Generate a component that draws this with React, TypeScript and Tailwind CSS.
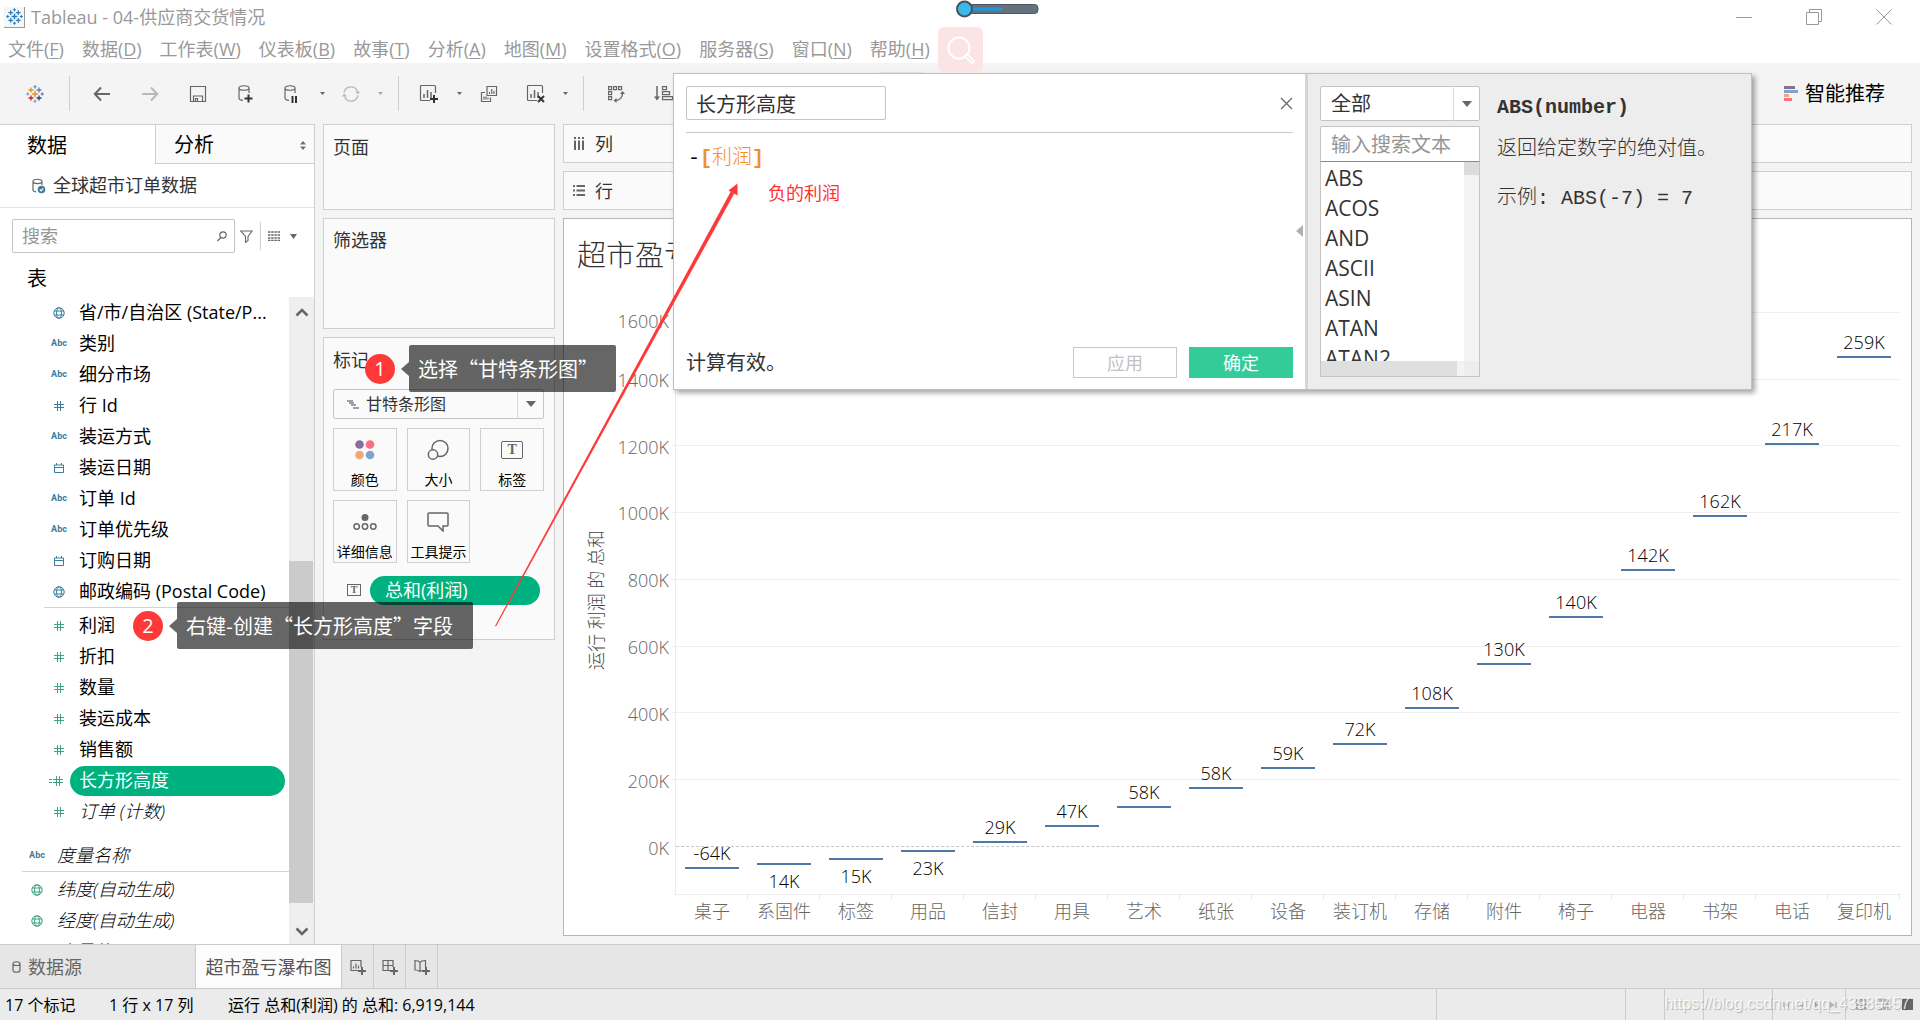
import React from "react";

const INK = "#666666";
const BLUE = "#3a7d9d";
const GREEN = "#3ba57f";

/* ---------- icons ---------- */

type Plus = { x: number; y: number; r: number; c: string; w: number };

const pluses: Plus[] = [
  { x: 9, y: 9, r: 3, c: "#eb912c", w: 1.6 },
  { x: 5, y: 5, r: 2.5, c: "#eb912c", w: 1.3 },
  { x: 13, y: 5, r: 2.5, c: "#5b879b", w: 1.3 },
  { x: 5, y: 13, r: 2.5, c: "#c72035", w: 1.3 },
  { x: 13, y: 13, r: 2.5, c: "#1f457e", w: 1.3 },
  { x: 9, y: 1.8, r: 1.6, c: "#59879b", w: 1.1 },
  { x: 9, y: 16.2, r: 1.6, c: "#7b9bb8", w: 1.1 },
  { x: 1.8, y: 9, r: 1.6, c: "#6b9aa8", w: 1.1 },
  { x: 16.2, y: 9, r: 1.6, c: "#5c6692", w: 1.1 },
];

function TableauLogo({ color, className }: { color?: string; className: string }) {
  return (
    <svg viewBox="0 0 18 18" className={className} fill="none">
      {pluses.map((p, i) => (
        <path
          key={i}
          d={`M${p.x - p.r} ${p.y}h${p.r * 2}M${p.x} ${p.y - p.r}v${p.r * 2}`}
          stroke={color ?? p.c}
          strokeWidth={p.w}
        />
      ))}
    </svg>
  );
}

function Svg({
  w,
  h,
  color = INK,
  sw = 1.2,
  children,
}: {
  w: number;
  h: number;
  color?: string;
  sw?: number;
  children: React.ReactNode;
}) {
  return (
    <svg width={w} height={h} viewBox={`0 0 ${w} ${h}`} fill="none" stroke={color} strokeWidth={sw} aria-hidden="true">
      {children}
    </svg>
  );
}

const BackIcon = () => (
  <Svg w={18} h={16} sw={2}>
    <path d="M17 8H2M8 1.5L1.8 8 8 14.5" />
  </Svg>
);
const ForwardIcon = () => (
  <Svg w={18} h={16} sw={2} color="#b8b8b8">
    <path d="M1 8h15M10 1.5L16.2 8 10 14.5" />
  </Svg>
);
const SaveIcon = () => (
  <Svg w={18} h={18}>
    <path d="M1.5 1.5h15v15h-15zM4.5 16v-5h9v5M6.5 16v-2.5h2V16" />
  </Svg>
);
const DbPath = () => <path d="M2 4c0-3 10-3 10 0s-10 3-10 0v10c0 1.4 2 2.2 4 2.3M12 4v5" />;
const DbPlusIcon = () => (
  <Svg w={18} h={20}>
    <DbPath />
    <path d="M7.5 14.5h8M11.5 10.5v8" stroke="#333" strokeWidth={2} />
  </Svg>
);
const DbPauseIcon = () => (
  <Svg w={18} h={20}>
    <DbPath />
    <path d="M9.5 12v7M13 12v7" stroke="#333" strokeWidth={2} />
  </Svg>
);
const RefreshIcon = () => (
  <Svg w={18} h={18} color="#b8b8b8" sw={1.3}>
    <path d="M2 7.5C3.5 0.5 13 0 15.5 6.5M16 10.5C14.5 17.5 5 18 2.5 11.5" />
    <path d="M13 6.5h5l-2 3zM0 11.5h5l-3-3z" fill="#b8b8b8" stroke="none" />
  </Svg>
);
const NewSheetIcon = ({ mark }: { mark: "plus" | "x" }) => (
  <Svg w={20} h={20}>
    <path d="M11 16.5H2.5a1 1 0 0 1-1-1v-13a1 1 0 0 1 1-1h13a1 1 0 0 1 1 1V9" />
    <path d="M5 14v-4M8.5 14V6M12 14V8" strokeWidth={1.5} />
    {mark === "plus" ? (
      <path d="M11 15h8M15 11v8" stroke="#333" strokeWidth={2} />
    ) : (
      <path d="M12 12l6 6M18 12l-6 6" stroke="#333" strokeWidth={2} />
    )}
  </Svg>
);
const DuplicateIcon = () => (
  <Svg w={18} h={18}>
    <path d="M7 1.5h9.5v9H7zM5 7.5H1.5v9h9V12.5M9.5 9V7M11.8 9V4M14 9V6M4 14.5v-3M6 14.5v-3M8 14.5v-2" />
  </Svg>
);
const SwapIcon = () => (
  <Svg w={18} h={18}>
    <path d="M1.6 1.6h3v3h-3zM6.6 1.6h3v3h-3zM11.6 1.6h3v3h-3zM1.6 6.6h3v3h-3zM1.6 11.6h3v3h-3z" />
    <path d="M15.5 8.5c0 3.500-2.500 6.500-6.500 7" strokeWidth={1.4} />
    <path d="M13 9l2.600-3 2.400 3zM9.500 13l-3 2.500 3 2.500z" fill={INK} stroke="none" />
  </Svg>
);
const SortIcon = () => (
  <Svg w={20} h={18}>
    <path d="M3 1v12" strokeWidth={1.5} />
    <path d="M0 11.5h6l-3 4z" fill={INK} stroke="none" />
    <path d="M8.5 1.6h4v3h-4zM8.5 6.6h7v3h-7zM8.5 11.6h10v3h-10z" />
  </Svg>
);
const Caret = ({ color = INK, small }: { color?: string; small?: boolean }) => (
  <svg width={small ? 5 : 10} height={small ? 3 : 6} viewBox="0 0 10 6" className="shrink-0" aria-hidden="true">
    <path d="M0 0h10L5 6z" fill={color} />
  </svg>
);

const GlobeIcon = ({ color }: { color: string }) => (
  <Svg w={12} h={12} color={color} sw={1}>
    <circle cx={6} cy={6} r={5.2} />
    <ellipse cx={6} cy={6} rx={2.4} ry={5.2} />
    <path d="M1 4h10M1 8h10" />
  </Svg>
);
const HashIcon = ({ color }: { color: string }) => (
  <Svg w={10} h={10} color={color} sw={1}>
    <path d="M0 3.5h10M0 6.5h10M3.5 0v10M6.5 0v10" />
  </Svg>
);
const CalcHashIcon = ({ color }: { color: string }) => (
  <Svg w={14} h={10} color={color} sw={1}>
    <path d="M4 3.5h10M4 6.5h10M7.5 0v10M10.5 0v10M0 3.5h3M0 6.5h3" />
  </Svg>
);
const DateIcon = ({ color }: { color: string }) => (
  <Svg w={10} h={10} color={color} sw={1}>
    <path d="M.5 2h9v7.5h-9zM.5 4.5h9M2.5 0v2M7.5 0v2" />
  </Svg>
);
const TextBox = ({ big }: { big?: boolean }) => (
  <span
    aria-hidden="true"
    className={
      big
        ? "flex h-[18px] w-[22px] items-center justify-center rounded-xs border border-[#666] font-['Liberation_Serif'] text-sm font-bold leading-none text-[#666]"
        : "flex h-3 w-3.5 items-center justify-center border border-[#666] font-['Liberation_Serif'] text-[10px] font-bold leading-none text-[#666]"
    }
  >
    T
  </span>
);

/* ---------- data ---------- */

const menus: [string, string][] = [
  ["文件", "F"],
  ["数据", "D"],
  ["工作表", "W"],
  ["仪表板", "B"],
  ["故事", "T"],
  ["分析", "A"],
  ["地图", "M"],
  ["设置格式", "O"],
  ["服务器", "S"],
  ["窗口", "N"],
  ["帮助", "H"],
];

type Kind = "geo" | "abc" | "num" | "date" | "calc";
type Field = { kind: Kind; name: string; color?: string; italic?: boolean; selected?: boolean };

const dimensions: Field[] = [
  { kind: "geo", name: "省/市/自治区 (State/P..." },
  { kind: "abc", name: "类别" },
  { kind: "abc", name: "细分市场" },
  { kind: "num", name: "行 Id" },
  { kind: "abc", name: "装运方式" },
  { kind: "date", name: "装运日期" },
  { kind: "abc", name: "订单 Id" },
  { kind: "abc", name: "订单优先级" },
  { kind: "date", name: "订购日期" },
  { kind: "geo", name: "邮政编码 (Postal Code)" },
];
const measures: Field[] = [
  { kind: "num", name: "利润", color: GREEN },
  { kind: "num", name: "折扣", color: GREEN },
  { kind: "num", name: "数量", color: GREEN },
  { kind: "num", name: "装运成本", color: GREEN },
  { kind: "num", name: "销售额", color: GREEN },
  { kind: "calc", name: "长方形高度", color: GREEN, selected: true },
  { kind: "num", name: "订单 (计数)", color: GREEN, italic: true },
];
const generated: Field[] = [
  { kind: "geo", name: "纬度(自动生成)", color: GREEN, italic: true },
  { kind: "geo", name: "经度(自动生成)", color: GREEN, italic: true },
  { kind: "num", name: "度量值", color: GREEN, italic: true },
];

type Mark = { name: string; label: string; total: number; below?: boolean };
const marks: Mark[] = [
  { name: "桌子", label: "-64K", total: -64 },
  { name: "系固件", label: "14K", total: -52, below: true },
  { name: "标签", label: "15K", total: -37, below: true },
  { name: "用品", label: "23K", total: -14, below: true },
  { name: "信封", label: "29K", total: 14 },
  { name: "用具", label: "47K", total: 61 },
  { name: "艺术", label: "58K", total: 119 },
  { name: "纸张", label: "58K", total: 177 },
  { name: "设备", label: "59K", total: 236 },
  { name: "装订机", label: "72K", total: 309 },
  { name: "存储", label: "108K", total: 417 },
  { name: "附件", label: "130K", total: 547 },
  { name: "椅子", label: "140K", total: 688 },
  { name: "电器", label: "142K", total: 829 },
  { name: "书架", label: "162K", total: 991 },
  { name: "电话", label: "217K", total: 1208 },
  { name: "复印机", label: "259K", total: 1467 },
];
const ticks = [0, 200, 400, 600, 800, 1000, 1200, 1400, 1600];
const MIN = -142;
const MAX = 1600;
const pct = (v: number) => `${((v - MIN) / (MAX - MIN)) * 100}%`;

const functions = ["ABS", "ACOS", "AND", "ASCII", "ASIN", "ATAN", "ATAN2"];

/* ---------- pieces ---------- */

function FieldIcon({ kind, color = BLUE }: { kind: Kind; color?: string }) {
  if (kind === "geo") return <GlobeIcon color={color} />;
  if (kind === "num") return <HashIcon color={color} />;
  if (kind === "calc") return <CalcHashIcon color={color} />;
  if (kind === "date") return <DateIcon color={color} />;
  return <span className="font-['Roboto'] text-[9px] font-bold text-[#3a7d9d]">Abc</span>;
}

function FieldRow({ f, outer }: { f: Field; outer?: boolean }) {
  return (
    <li className={outer ? "flex h-[31px] items-center pl-[27px]" : "flex h-[31px] items-center pl-[49px]"}>
      <span className={f.kind === "calc" ? "flex w-5 justify-start" : "flex w-5 justify-center"}>
        <FieldIcon kind={f.kind} color={f.color} />
      </span>
      {f.selected ? (
        <span className="ml-px mr-1 flex h-[30px] flex-1 items-center rounded-full bg-[#00b180] pl-[9px] text-white">
          {f.name}
        </span>
      ) : (
        <span className={f.italic ? "whitespace-nowrap pl-2.5 font-light italic" : "whitespace-nowrap pl-2.5"}>
          {f.name}
        </span>
      )}
    </li>
  );
}

function Tool({ label, className, children }: { label: string; className: string; children: React.ReactNode }) {
  return (
    <button type="button" aria-label={label} className={`flex h-9 shrink-0 items-center justify-center ${className}`}>
      {children}
    </button>
  );
}
const Sep = ({ className = "" }: { className?: string }) => (
  <div className={`h-[35px] w-px shrink-0 bg-[#cfcfcf] ${className}`} />
);

function DataPane() {
  return (
    <aside className="flex w-[315px] shrink-0 flex-col overflow-hidden border-r border-t border-[#cfcfcf] bg-white text-lg leading-[31px] text-black">
      <div className="flex h-[39px] shrink-0 text-xl">
        <button type="button" className="w-[155px] pl-[27px] pt-0.5 text-left">
          数据
        </button>
        <button
          type="button"
          className="flex flex-1 items-center justify-between border-b border-l border-[#cfcfcf] bg-[#fafafa] pl-[18px] pr-2 pt-0.5"
        >
          分析
          <svg width="6" height="9" viewBox="0 0 6 9" fill="#5f7482" aria-hidden="true">
            <path d="M0 3.5L3 0l3 3.5zM0 5.5h6L3 9z" />
          </svg>
        </button>
      </div>
      <div className="flex h-11 shrink-0 items-center border-b border-[#e3e3e3] pl-8 text-[#333]">
        <Svg w={14} h={16}>
          <path d="M1 3.5c0-3 9-3 9 0s-9 2.5-9 0V12c0 1 1 1.6 3 1.8M10 3.5V7" />
          <circle cx={9.5} cy={11.5} r={3.8} fill={BLUE} stroke="none" />
          <path d="M7.8 11.5l1.3 1.3 2.2-2.4" stroke="#fff" />
        </Svg>
        <span className="pl-[7px]">全球超市订单数据</span>
      </div>
      <div className="mt-[11px] flex h-[34px] shrink-0 items-center pl-3">
        <label className="flex h-full w-[223px] items-center rounded-xs border border-[#c4c4c4] pl-[9px] pr-[7px]">
          <input
            type="text"
            aria-label="搜索"
            placeholder="搜索"
            className="w-0 flex-1 outline-none placeholder:text-[#969696]"
          />
          <Svg w={10} h={11} sw={1.2}>
            <circle cx={6} cy={4} r={3.2} />
            <path d="M3.7 6.5L.5 10" />
          </Svg>
        </label>
        <button type="button" aria-label="筛选" className="pl-[5px]">
          <Svg w={13} h={13} sw={1.1}>
            <path d="M.8 1h11.4L8 6.5V10.5L5.5 12.4V6.5z" />
          </Svg>
        </button>
        <div className="ml-[7px] h-7 w-px bg-[#cfcfcf]" />
        <button type="button" aria-label="视图" className="flex items-center gap-2.5 pl-[7px]">
          <Svg w={12} h={10} sw={1.4}>
            <path d="M0 1h12M0 4h12M0 7h12M0 9.5h12" strokeDasharray="2.4 .8" />
          </Svg>
          <svg width="7" height="5" viewBox="0 0 7 5" aria-hidden="true">
            <path d="M0 0h7L3.5 5z" fill={INK} />
          </svg>
        </button>
      </div>
      <h2 className="h-11 shrink-0 pl-[27px] pt-2.5 text-xl leading-[31px]">表</h2>
      <div className="flex min-h-0 flex-1">
        <ul className="flex-1 overflow-hidden">
          {dimensions.map((f) => (
            <FieldRow key={f.name} f={f} />
          ))}
          <li className="ml-11 h-[3px] border-t border-[#d4d4d4]" />
          {measures.map((f) => (
            <FieldRow key={f.name} f={f} />
          ))}
          <li className="h-[13px]" />
          <FieldRow outer f={{ kind: "abc", name: "度量名称", italic: true }} />
          <li className="ml-[22px] h-[3px] border-t border-[#d4d4d4]" />
          {generated.map((f) => (
            <FieldRow key={f.name} outer f={f} />
          ))}
        </ul>
        <div className="flex w-[25px] flex-col items-center bg-[#efefef]">
          <div className="flex h-[264px] w-full justify-center pt-2.5">
            <Svg w={14} h={10} sw={2.5}>
              <path d="M1.5 8.5L7 3l5.5 5.5" />
            </Svg>
          </div>
          <div className="h-[342px] w-6 self-start bg-[#cbcbcb]" />
          <div className="flex w-full justify-center pt-6">
            <Svg w={14} h={10} sw={2.5}>
              <path d="M1.5 1.5L7 7l5.5-5.5" />
            </Svg>
          </div>
        </div>
      </div>
    </aside>
  );
}

function MarkButton({ label, children }: { label: string; children: React.ReactNode }) {
  return (
    <button
      type="button"
      className="flex h-[63px] flex-col items-center justify-between border border-[#cfcfcf] bg-[#fafafa] pb-px pt-[9px] text-sm leading-[18px] text-black"
    >
      <span className="flex h-6 items-center">{children}</span>
      <span className="whitespace-nowrap">{label}</span>
    </button>
  );
}

function Cards() {
  return (
    <div className="flex w-[232px] shrink-0 flex-col gap-2 text-lg leading-6 text-[#333]">
      <section className="h-[86px] border border-[#cfcfcf] bg-[#fafafa] px-[9px] py-2.5">页面</section>
      <section className="h-[111px] border border-[#cfcfcf] bg-[#fafafa] px-[9px] py-[9px]">筛选器</section>
      <section className="flex h-[303px] flex-col border border-[#cfcfcf] bg-[#fafafa] pl-[9px] pr-2.5">
        <h2 className="pt-2.5">标记</h2>
        <div className="relative mt-[17px] flex h-[30px] items-center">
          <select
            aria-label="标记类型"
            className="h-full w-full appearance-none rounded-xs border border-[#c4c4c4] bg-[#fafafa] pl-8 text-base outline-none"
          >
            <option>甘特条形图</option>
          </select>
          <span className="pointer-events-none absolute left-3.5">
            <svg width="12" height="9" viewBox="0 0 12 9" fill="#a0a0a0" aria-hidden="true">
              <path d="M0 0h6v2H0zM2 2h5v2H2zM4 4h5v2H4zM6 7h6v2H6z" />
            </svg>
          </span>
          <span className="pointer-events-none absolute right-0 flex h-full w-[27px] items-center justify-center border-l border-[#d9d9d9]">
            <Caret />
          </span>
        </div>
        <div className="mt-[9px] grid grid-cols-3 gap-x-2.5 gap-y-[9px]">
          <MarkButton label="颜色">
            <svg width="20" height="20" viewBox="0 0 20 20" aria-hidden="true">
              <circle cx="4.5" cy="4.5" r="4.3" fill="#86709a" />
              <circle cx="15" cy="4.5" r="4.3" fill="#fb6f80" />
              <circle cx="4.5" cy="15" r="4.3" fill="#f2a679" />
              <circle cx="15" cy="15" r="4.3" fill="#7fa3cb" />
            </svg>
          </MarkButton>
          <MarkButton label="大小">
            <Svg w={22} h={22} sw={1.5}>
              <circle cx={13} cy={9.5} r={8} />
              <circle cx={6} cy={15.5} r={4.7} fill="#fafafa" />
            </Svg>
          </MarkButton>
          <MarkButton label="标签">
            <TextBox big />
          </MarkButton>
          <MarkButton label="详细信息">
            <Svg w={24} h={16} sw={1.5}>
              <circle cx={12} cy={3.5} r={3.5} fill={INK} stroke="none" />
              <circle cx={3.7} cy={12.5} r={2.7} />
              <circle cx={12} cy={12.5} r={2.7} />
              <circle cx={20.3} cy={12.5} r={2.7} />
            </Svg>
          </MarkButton>
          <MarkButton label="工具提示">
            <Svg w={22} h={20} sw={1.5}>
              <path d="M2 1h18a1 1 0 0 1 1 1v11a1 1 0 0 1-1 1h-4v5l-5-5H2a1 1 0 0 1-1-1V2a1 1 0 0 1 1-1z" />
            </Svg>
          </MarkButton>
        </div>
        <div className="mt-3 flex h-[30px] items-center gap-[9px] pl-3.5 pr-1">
          <TextBox />
          <span className="flex h-[29px] flex-1 items-center rounded-full bg-[#00b180] pl-[15px] text-white">
            总和(利润)
          </span>
        </div>
      </section>
    </div>
  );
}

function Chart() {
  return (
    <section className="flex min-h-0 flex-1 flex-col border border-[#b5b5b5] bg-white pb-10 pr-[11px]">
      <h1 className="h-[94px] shrink-0 pl-[13px] pt-4 text-[29px] font-light leading-10 text-[#333]">
        超市盈亏瀑布图
      </h1>
      <div className="flex min-h-0 flex-1">
        <div className="flex w-16 items-center justify-center pb-2">
          <span className="rotate-180 whitespace-nowrap text-lg font-light leading-6 text-[#444] [text-orientation:sideways] [writing-mode:vertical-rl]">
            运行 利润 的 总和
          </span>
        </div>
        <div className="relative w-[47px]">
          {ticks.map((t) => (
            <span
              key={t}
              className={
                t === MAX
                  ? "absolute right-1.5 translate-y-full text-lg font-light leading-4 text-[#666]"
                  : "absolute right-1.5 translate-y-1/2 text-lg font-light leading-[22px] text-[#666]"
              }
              style={{ bottom: pct(t) }}
            >
              {t}K
            </span>
          ))}
        </div>
        <div className="relative flex flex-1 border-b border-l border-[#ececec]">
          {ticks.map((t) => (
            <div
              key={t}
              className={
                t === 0
                  ? "absolute inset-x-0 border-t border-dashed border-[#c6c6c6]"
                  : "absolute -left-1 right-0 border-t border-[#f0f0f0]"
              }
              style={{ bottom: pct(t) }}
            />
          ))}
          {marks.map((m) => (
            <div key={m.name} className="relative flex-1">
              <div
                className="absolute inset-x-[9px] flex h-0.5 translate-y-1/2 justify-center bg-[#4e79a7]"
                style={{ bottom: pct(m.total) }}
              >
                <span
                  className={
                    m.below
                      ? "absolute top-2 text-lg font-light leading-5 text-black"
                      : "absolute bottom-1.5 text-lg font-light leading-5 text-black"
                  }
                >
                  {m.label}
                </span>
              </div>
              <span className="absolute inset-x-0 top-full h-[5px] border-r border-[#e6e6e6]" />
              <span className="absolute inset-x-0 top-full whitespace-nowrap pt-[5px] text-center text-lg font-light leading-6 text-[#666]">
                {m.name}
              </span>
            </div>
          ))}
        </div>
      </div>
    </section>
  );
}

function CalcDialog() {
  return (
    <div
      role="dialog"
      aria-label="长方形高度"
      className="absolute left-[673px] top-[73px] flex h-[317px] w-[1079px] border border-[#c0c0c0] bg-white text-xl text-[#333] shadow-[3px_3px_5px_rgba(0,0,0,0.35)]"
    >
      <div className="flex flex-1 flex-col pb-[11px] pl-3 pr-3">
        <div className="flex h-[59px] items-center justify-between border-b border-[#c8c8c8]">
          <input
            type="text"
            aria-label="字段名称"
            defaultValue="长方形高度"
            className="h-[34px] w-[200px] rounded-xs border border-[#c4c4c4] px-[9px] outline-none"
          />
          <button type="button" aria-label="关闭">
            <Svg w={13} h={13} sw={1.2}>
              <path d="M1 1l11 11M12 1L1 12" />
            </Svg>
          </button>
        </div>
        <div className="pl-0.5 pt-3 font-['Liberation_Mono','Noto_Sans_CJK_SC',monospace] leading-7 text-[#f28e2b]">
          <span className="text-black">-</span>
          <b>[</b>
          <span className="font-light">利润</span>
          <b>]</b>
        </div>
        <p className="pl-[82px] pt-1.5 text-lg leading-7 text-[#ff3333]">负的利润</p>
        <div className="mt-auto flex h-[31px] items-center gap-3">
          <span className="flex-1">计算有效。</span>
          <button type="button" disabled className="h-full w-[104px] border border-[#c8c8c8] text-lg leading-7 text-[#c2c2c2]">
            应用
          </button>
          <button type="button" className="h-full w-[104px] bg-[#33cc99] text-lg leading-7 text-white">
            确定
          </button>
        </div>
      </div>
      <div className="flex w-[446px] border-l-[3px] border-[#d5d5d5] bg-[#ededed] py-3 pl-3">
        <button type="button" aria-label="折叠" className="absolute left-[622px] top-[151px]">
          <svg width="7" height="12" viewBox="0 0 7 12" aria-hidden="true">
            <path d="M7 0v12L0 6z" fill="#b0b0b0" />
          </svg>
        </button>
        <div className="flex w-40 shrink-0 flex-col">
          <div className="relative h-[35px]">
            <select
              aria-label="函数类别"
              className="h-full w-full appearance-none rounded-xs border border-[#c4c4c4] bg-white pl-2.5 outline-none"
            >
              <option>全部</option>
            </select>
            <span className="pointer-events-none absolute right-0 top-0 flex h-full w-[27px] items-center justify-center border-l border-[#d9d9d9]">
              <Caret />
            </span>
          </div>
          <input
            type="text"
            aria-label="输入搜索文本"
            placeholder="输入搜索文本"
            className="mt-[5px] h-9 w-full rounded-t-xs border border-b-[#8a8a8a] border-[#c4c4c4] bg-white pl-2.5 outline-none placeholder:text-[#969696]"
          />
          <div className="flex h-[215px] flex-col border border-t-0 border-[#c4c4c4] bg-white">
            <div className="flex min-h-0 flex-1">
              <ul className="flex-1 overflow-hidden pl-1 pt-px">
                {functions.map((f) => (
                  <li key={f} className="h-[30px] text-[21px] leading-[30px]">
                    {f}
                  </li>
                ))}
              </ul>
              <div className="w-[15px] bg-[#f3f3f3]">
                <div className="h-[13px] bg-[#dcdcdc]" />
              </div>
            </div>
            <div className="flex h-[15px] bg-[#f3f3f3]">
              <div className="w-[136px] bg-[#dfdfdf]" />
              <div className="ml-auto w-[15px] bg-[#ededed]" />
            </div>
          </div>
        </div>
        <div className="pl-[17px] pt-2 font-['Liberation_Mono','Noto_Sans_CJK_SC',monospace]">
          <h3 className="font-bold leading-7">ABS(number)</h3>
          <p className="pt-3.5 font-light leading-7">返回给定数字的绝对值。</p>
          <p className="pt-[21px] font-light leading-7">示例: ABS(-7) = 7</p>
        </div>
      </div>
    </div>
  );
}

function Callout({ n, text, className, tip }: { n: number; text: string; className: string; tip: string }) {
  return (
    <div className={`absolute flex items-center ${className}`}>
      <span className="flex h-[30px] w-[30px] items-center justify-center rounded-full bg-[#ff3838] text-xl text-white">
        {n}
      </span>
      <svg width="8" height="14" viewBox="0 0 8 14" className="ml-1.5" aria-hidden="true">
        <path d="M8 0v14L0 7z" fill="#000" opacity="0.6" />
      </svg>
      <span
        className={`flex h-[47px] items-center whitespace-nowrap rounded-xs bg-black/60 pl-[9px] font-['Noto_Sans_CJK_SC',sans-serif] text-xl text-white ${tip}`}
      >
        {text}
      </span>
    </div>
  );
}

export default function App() {
  return (
    <div
      lang="zh-CN"
      className="relative flex h-screen flex-col overflow-hidden bg-[#f4f4f4] font-['Open_Sans','Noto_Sans_CJK_SC',sans-serif]"
    >
      <header className="h-[63px] shrink-0 bg-white text-lg text-[#999]">
        <div className="flex h-[34px] items-center justify-between pl-1">
          <div className="flex items-center">
            <span className="flex h-[21px] w-[21px] items-center justify-center border-b border-r border-[#999] bg-[#f6f6f6]">
              <TableauLogo color="#2f7db5" className="h-[17px] w-[17px]" />
            </span>
            <span className="pl-1.5">Tableau - 04-供应商交货情况</span>
          </div>
          <div className="flex items-center gap-[54px] pr-7">
            <button type="button" aria-label="最小化">
              <Svg w={16} h={16} color="#999" sw={1}>
                <path d="M0 8.5h16" />
              </Svg>
            </button>
            <button type="button" aria-label="还原">
              <Svg w={16} h={16} color="#999" sw={1}>
                <path d="M.5 3.5h12v12H.5zM3.5 3.5v-3h12v12h-3" />
              </Svg>
            </button>
            <button type="button" aria-label="关闭窗口">
              <Svg w={16} h={16} color="#999" sw={1}>
                <path d="M.5.5l15 15M15.5.5l-15 15" />
              </Svg>
            </button>
          </div>
        </div>
        <nav className="flex h-[29px] items-center gap-[18px] pl-2 leading-7">
          {menus.map(([name, key]) => (
            <button key={key} type="button" className="whitespace-nowrap">
              {name}(<u className="underline-offset-2">{key}</u>)
            </button>
          ))}
        </nav>
      </header>

      <div className="flex h-[61px] shrink-0 items-center">
        <Tool label="起始页" className="w-[69px]"><TableauLogo className="h-[18px] w-[18px]" /></Tool>
        <Sep />
        <Tool label="后退" className="ml-2 w-12"><BackIcon /></Tool>
        <Tool label="前进" className="w-12"><ForwardIcon /></Tool>
        <Tool label="保存" className="w-12"><SaveIcon /></Tool>
        <Tool label="新建数据源" className="w-12"><DbPlusIcon /></Tool>
        <Tool label="暂停自动更新" className="w-11"><DbPauseIcon /></Tool>
        <Tool label="更新选项" className="w-4"><Caret small /></Tool>
        <Tool label="刷新" className="w-[42px]"><RefreshIcon /></Tool>
        <Tool label="刷新选项" className="w-4"><Caret small color="#aaa" /></Tool>
        <Sep className="ml-2.5" />
        <Tool label="新建工作表" className="ml-1.5 w-12"><NewSheetIcon mark="plus" /></Tool>
        <Tool label="新建选项" className="w-3"><Caret small /></Tool>
        <Tool label="复制工作表" className="w-12"><DuplicateIcon /></Tool>
        <Tool label="清除工作表" className="w-[46px]"><NewSheetIcon mark="x" /></Tool>
        <Tool label="清除选项" className="w-3"><Caret small /></Tool>
        <Sep className="ml-3" />
        <Tool label="交换行和列" className="ml-2 w-12"><SwapIcon /></Tool>
        <Tool label="升序排序" className="w-12"><SortIcon /></Tool>
        <div className="ml-[190px] h-11 w-[45px] rounded-xs bg-[#e6e6e6]" />
        <button type="button" className="ml-auto flex items-center gap-[7px] pr-[35px] text-xl text-black">
          <svg width="14" height="16" viewBox="0 0 14 16" aria-hidden="true">
            <path d="M0 0h11v3H0z" fill="#86709a" />
            <path d="M0 4h14v3H0z" fill="#7fa3cb" />
            <path d="M0 8h5v3H0z" fill="#f2a679" />
            <path d="M0 12h8v3H0z" fill="#fb6f80" />
          </svg>
          智能推荐
        </button>
      </div>

      <div className="flex min-h-0 flex-1 gap-2">
        <DataPane />
        <div className="flex min-w-0 flex-1 gap-2 pb-2 pr-2">
          <Cards />
          <main className="flex min-w-0 flex-1 flex-col gap-2 text-lg text-[#333]">
            <div className="flex h-[39px] shrink-0 items-center gap-2.5 border border-[#cfcfcf] bg-[#fafafa] pl-[9px]">
              <Svg w={12} h={13} sw={2}>
                <path d="M2 0v2M2 3.5V13M6 0v2M6 3.5V13M10 0v2M10 3.5V13" />
              </Svg>
              列
            </div>
            <div className="flex h-[39px] shrink-0 items-center gap-2.5 border border-[#cfcfcf] bg-[#fafafa] pl-[9px]">
              <Svg w={12} h={11} sw={2}>
                <path d="M0 1h2M3.5 1H12M0 5.5h2M3.5 5.5H12M0 10h2M3.5 10H12" />
              </Svg>
              行
            </div>
            <Chart />
          </main>
        </div>
      </div>

      <div className="flex h-[45px] shrink-0 border-y border-[#cbcbcb] bg-[#e6e6e6] text-lg text-[#666]">
        <button type="button" className="flex w-[195px] items-center gap-[7px] pl-3">
          <Svg w={9} h={12}>
            <path d="M1 3c0-3 7-3 7 0v6c0 3-7 3-7 0zM1 3c0 2 7 2 7 0" />
          </Svg>
          数据源
        </button>
        <button type="button" className="w-[147px] border-x border-[#cbcbcb] bg-[#fcfcfc] text-[#555]">
          超市盈亏瀑布图
        </button>
        <button type="button" aria-label="新建工作表标签" className="flex w-8 items-center justify-center border-r border-[#cbcbcb]">
          <Svg w={16} h={16}>
            <path d="M8 11.5H1v-10h10V8M3.5 9.5v-2M6 9.5v-5M8.5 9.5v-3" />
            <path d="M8 12h8M12 8v8" strokeWidth={2} />
          </Svg>
        </button>
        <button type="button" aria-label="新建仪表板" className="flex w-8 items-center justify-center border-r border-[#cbcbcb]">
          <Svg w={16} h={16}>
            <path d="M8 11.5H1v-10h10V8M6 1.5v10M1 6.5h10" />
            <path d="M8 12h8M12 8v8" strokeWidth={2} />
          </Svg>
        </button>
        <button type="button" aria-label="新建故事" className="flex w-8 items-center justify-center border-r border-[#cbcbcb]">
          <Svg w={16} h={16}>
            <path d="M6 3.5C5 2 3 1.5 1 1.5v9.500c2 0 4 .5 5 1.500.5-.5 1.200-.8 2-1M6 3.500C7 2 9 1.500 11.500 1.500V8M6 3.500v9" />
            <path d="M8 12h8M12 8v8" strokeWidth={2} />
          </Svg>
        </button>
      </div>

      <footer className="flex h-[31px] shrink-0 items-stretch bg-[#ebebeb] pl-[5px] text-base leading-[32px] text-black">
        <span className="w-[104px]">17 个标记</span>
        <span className="w-[119px]">1 行 x 17 列</span>
        <span>运行 总和(利润) 的 总和: 6,919,144</span>
        <div className="ml-auto flex items-stretch">
          <div className="w-[189px] border-l border-[#cbcbcb]" />
          <div className="w-[39px] border-l border-[#cbcbcb]" />
          <div className="w-[39px] border-l border-[#cbcbcb]" />
          <div className="w-[69px] border-l border-[#cbcbcb]" />
          <div className="flex w-[73px] items-center border-l border-[#cbcbcb] pl-2.5">
            <Svg w={54} h={8} color="#b5b5b5" sw={1.5}>
              <path d="M1 1v6M53 1v6" />
              <path d="M6 1v6L2.5 4zM20 1v6L16 4zM32 1v6l4-3zM47 1v6l5-3z" fill="#b5b5b5" stroke="none" />
            </Svg>
          </div>
          <div className="flex w-[75px] items-center gap-3 border-l border-[#cbcbcb] pl-2.5">
            <Svg w={11} h={11} color="#b5b5b5" sw={3}>
              <path d="M0 1.5h11M0 5.5h11M0 9.5h11" strokeDasharray="3 1" />
            </Svg>
            <Svg w={11} h={11} color="#b5b5b5" sw={3}>
              <path d="M0 1.5h3M4 1.5h7M4 5.5h7" />
              <path d="M0 9.5h11" strokeDasharray="3 1" />
            </Svg>
            <span className="h-[11px] w-[11px] bg-[#666]" />
          </div>
        </div>
      </footer>

      <CalcDialog />

      <div className="absolute left-[938px] top-[27px] flex h-[45px] w-[45px] items-center justify-center rounded-md bg-[#fce4e4]">
        <svg width="28" height="28" viewBox="0 0 28 28" fill="none" stroke="#fff" aria-hidden="true">
          <circle cx="12" cy="12" r="10.5" strokeWidth="2" />
          <path d="M20 20l5 5" strokeWidth="5" strokeLinecap="round" />
          <path d="M20 20l5 5" stroke="#fce4e4" strokeWidth="1.5" strokeLinecap="round" />
        </svg>
      </div>
      <svg className="absolute left-[954px] top-0" width="86" height="19" viewBox="0 0 86 19" aria-hidden="true">
        <rect x="12" y="4.5" width="72" height="9" rx="3.5" fill="#64727f" stroke="#4c5660" />
        <path d="M14 9h34" stroke="#1e9be0" strokeWidth="3" />
        <circle cx="10.5" cy="9" r="7.5" fill="#3bb8e8" stroke="#47525c" strokeWidth="2" />
      </svg>

      <Callout n={1} text="选择“甘特条形图”" className="left-[365px] top-[345px]" tip="w-[207px]" />
      <Callout n={2} text="右键-创建“长方形高度”字段" className="left-[133px] top-[602px]" tip="w-[296px]" />
      <svg
        className="pointer-events-none absolute left-[490px] top-[180px]"
        width="252"
        height="452"
        viewBox="0 0 252 452"
        fill="#ff3838"
        aria-hidden="true"
      >
        <path d="M5 446L6 446.5L244.2 13.5L240.8 11.5Z" />
        <path d="M247.5 3.5L238.5 10.5L247.5 15.5Z" />
      </svg>
      <span className="pointer-events-none absolute bottom-1 right-2.5 whitespace-nowrap font-['Liberation_Sans'] text-base leading-6 text-white/80 [text-shadow:1px_1px_1px_rgba(0,0,0,0.25)]">
        https://blog.csdn.net/qq_43985457
      </span>
    </div>
  );
}
